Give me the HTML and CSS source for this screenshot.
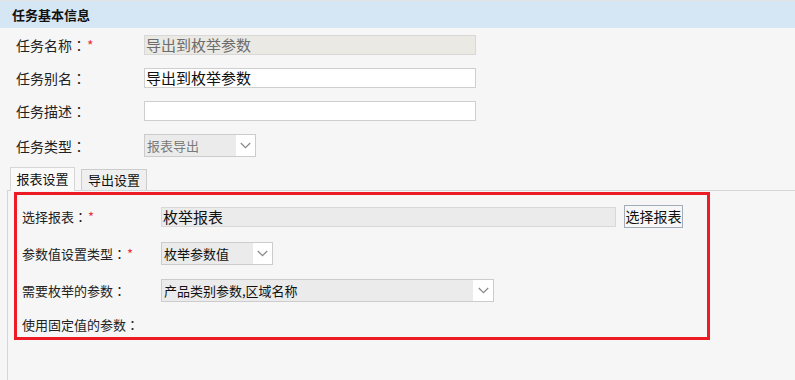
FILE: index.html
```html
<!DOCTYPE html>
<html lang="zh-CN">
<head>
<meta charset="utf-8">
<title>任务基本信息</title>
<link rel="stylesheet" href="styles.css">
</head>
<body>
<div class="header">任务基本信息</div>
<div class="form">
  <div class="row">
    <span class="lbl">任务名称<span class="colon" lang="zh-TW">：</span><span class="req">*</span></span>
    <div class="input disabled">导出到枚举参数</div>
  </div>
  <div class="row">
    <span class="lbl">任务别名<span class="colon" lang="zh-TW">：</span></span>
    <div class="input">导出到枚举参数</div>
  </div>
  <div class="row">
    <span class="lbl">任务描述<span class="colon" lang="zh-TW">：</span></span>
    <div class="input"></div>
  </div>
  <div class="row">
    <span class="lbl">任务类型<span class="colon" lang="zh-TW">：</span></span>
    <div class="select sel-type grey">
      <span class="val">报表导出</span>
      <span class="arrow"><svg width="11" height="7" viewBox="0 0 11 7"><polyline points="0.8,1 5.5,5.6 10.2,1" fill="none" stroke="#8a8a8a" stroke-width="1.3"/></svg></span>
    </div>
  </div>
</div>
<div class="tabs-wrap">
  <div class="tabs">
    <div class="tab active">报表设置</div>
    <div class="tab">导出设置</div>
  </div>
  <div class="panel">
    <div class="box">
      <div class="row">
        <span class="blbl">选择报表<span class="colon" lang="zh-TW">：</span><span class="req">*</span></span>
        <div class="input grey-input">枚举报表</div>
        <div class="btn">选择报表</div>
      </div>
      <div class="row">
        <span class="blbl">参数值设置类型<span class="colon" lang="zh-TW">：</span><span class="req">*</span></span>
        <div class="select sel-short">
          <span class="val">枚举参数值</span>
          <span class="arrow"><svg width="11" height="7" viewBox="0 0 11 7"><polyline points="0.8,1 5.5,5.6 10.2,1" fill="none" stroke="#8a8a8a" stroke-width="1.3"/></svg></span>
        </div>
      </div>
      <div class="row">
        <span class="blbl">需要枚举的参数<span class="colon" lang="zh-TW">：</span></span>
        <div class="select sel-long">
          <span class="val">产品类别参数,区域名称</span>
          <span class="arrow"><svg width="11" height="7" viewBox="0 0 11 7"><polyline points="0.8,1 5.5,5.6 10.2,1" fill="none" stroke="#8a8a8a" stroke-width="1.3"/></svg></span>
        </div>
      </div>
      <div class="row">
        <span class="blbl">使用固定值的参数<span class="colon" lang="zh-TW">：</span></span>
      </div>
    </div>
  </div>
</div>
</body>
</html>
```

FILE: styles.css
```css
html, body {
  margin: 0;
  padding: 0;
}
body {
  background: #f6f6f6;
  font-family: "Noto Sans CJK SC", "Microsoft YaHei", sans-serif;
  color: #222;
  height: 380px;
  overflow: hidden;
}
.header {
  height: 27px;
  border-top: 1px solid #e4e4e4;
  background: #d5e6f5;
  font-size: 13px;
  font-weight: bold;
  line-height: 27px;
  padding-left: 12px;
  color: #111;
}
.form {
  display: flex;
  flex-direction: column;
  gap: 13px;
  padding: 7px 0 0 16px;
}
.row {
  display: flex;
  align-items: center;
}
.lbl {
  width: 128px;
  font-size: 14px;
  line-height: 18px;
  white-space: nowrap;
}
.colon {
  font-family: "Noto Sans CJK TC", "Noto Sans CJK SC", sans-serif;
}
.req {
  color: #e8333a;
  margin-left: 1px;
}
.input {
  width: 332px;
  height: 20px;
  box-sizing: border-box;
  border: 1px solid #cfcfcf;
  background: #fff;
  font-size: 15px;
  line-height: 18px;
  padding-left: 1px;
  white-space: nowrap;
  overflow: hidden;
  color: #111;
}
.input.disabled {
  background: #eae9e4;
  border-color: #d8d8d8;
  color: #6d6d6d;
}
.select {
  display: flex;
  height: 23px;
  box-sizing: border-box;
  border: 1px solid #cccccc;
  background: #ebebeb;
  font-size: 13px;
  color: #111;
}
.select.grey {
  color: #7a7a7a;
}
.select .val {
  flex: 1;
  padding-left: 2px;
  line-height: 21px;
  white-space: nowrap;
  overflow: hidden;
}
.select .arrow {
  width: 19px;
  background: #fff;
  display: flex;
  align-items: center;
  justify-content: center;
}
.sel-type {
  width: 112px;
}
.tabs-wrap {
  margin: 10px 0 0 7px;
}
.tabs {
  display: flex;
  align-items: flex-end;
  padding-left: 3px;
  height: 23px;
}
.tab {
  box-sizing: border-box;
  border: 1px solid #cccccc;
  border-bottom: none;
  font-size: 13px;
  text-align: center;
  color: #111;
  width: 66px;
  height: 21px;
  line-height: 20px;
  background: #efefef;
  margin-left: 6px;
}
.tab.active {
  width: 65px;
  height: 24px;
  line-height: 22px;
  margin-left: 0;
  margin-bottom: -1px;
  background: #fafafa;
  border-color: #d6d6d6;
  position: relative;
  z-index: 1;
}
.panel {
  border-top: 1px solid #d6d6d6;
  border-left: 1px solid #d6d6d6;
  height: 200px;
}
.box {
  margin: 1px 0 0 6px;
  width: 696px;
  height: 148px;
  box-sizing: border-box;
  border: 3px solid #ed1c24;
  padding: 10px 0 0 5px;
  display: flex;
  flex-direction: column;
  gap: 14px;
}
.blbl {
  width: 139px;
  font-size: 13px;
  line-height: 18px;
  white-space: nowrap;
}
.grey-input {
  width: 455px;
  background: #ebebeb;
  border-color: #d8d8d8;
}
.btn {
  margin-left: 8px;
  width: 59px;
  height: 23px;
  box-sizing: border-box;
  border: 1px solid #a3adb9;
  background: #f7f7f7;
  font-size: 14px;
  line-height: 21px;
  text-align: center;
  color: #111;
}
.sel-short {
  width: 112px;
}
.sel-long {
  width: 333px;
}
.sel-long .arrow {
  width: 20px;
}
```
